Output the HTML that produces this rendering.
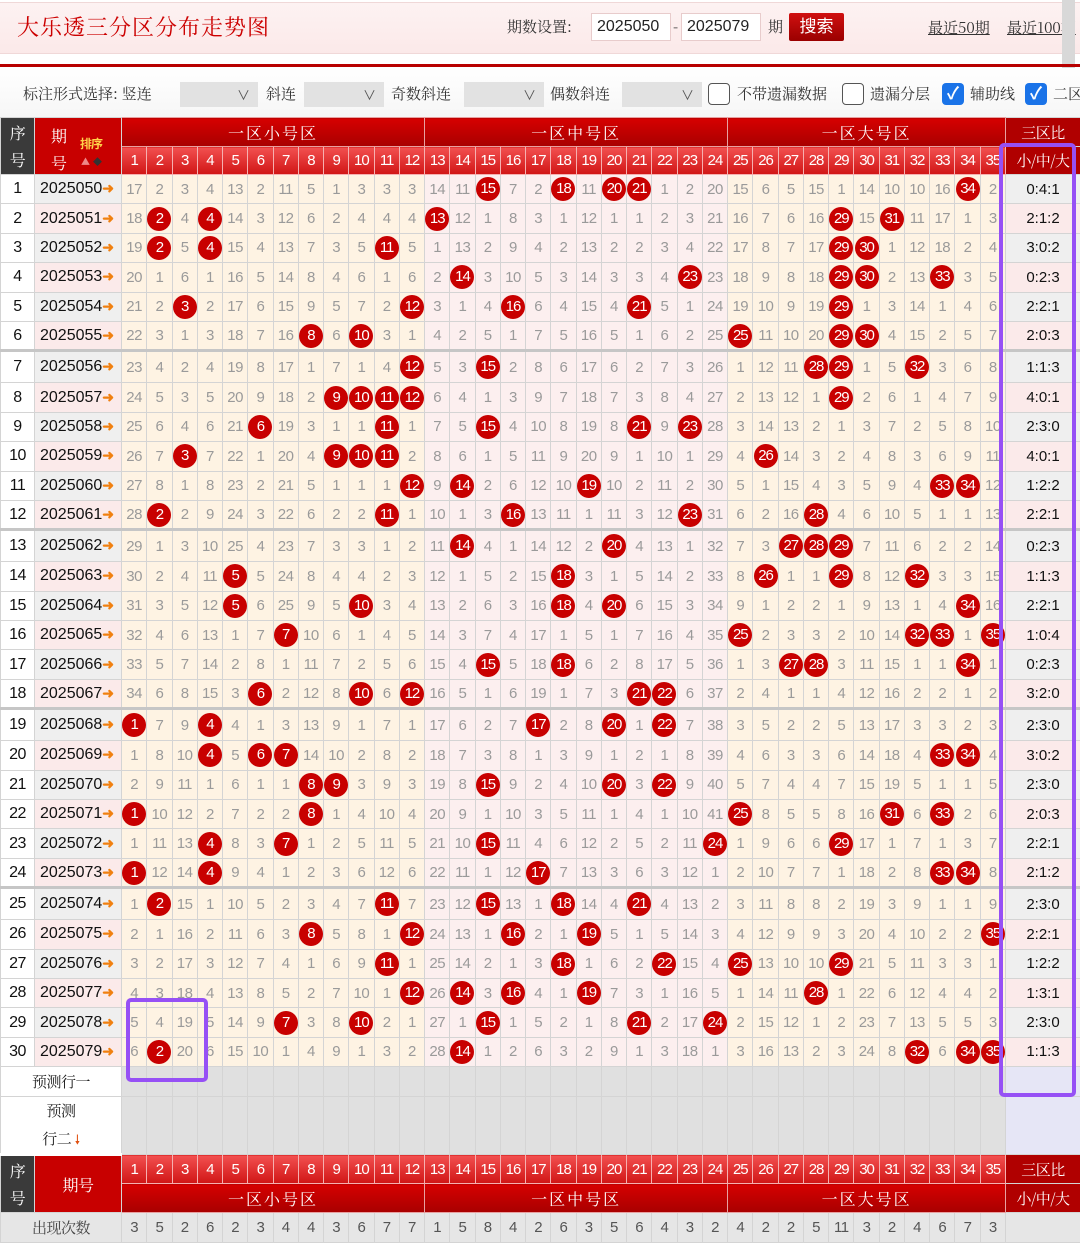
<!DOCTYPE html>
<html><head><meta charset="utf-8">
<style>
*{box-sizing:border-box}
body{margin:0;width:1080px;height:1234px;overflow:hidden;background:#fff;font-family:"Liberation Sans","Noto Sans CJK SC",sans-serif;position:relative}
.top{position:absolute;left:0;top:2px;width:1080px;height:52px;background:linear-gradient(#fdf2f2,#fbe9e9);border-top:1px solid #f0d8d8;border-bottom:1px solid #f0d8d8}
.title{position:absolute;left:17px;top:11px;font-family:"Noto Serif CJK SC",serif;font-size:22px;color:#c00;letter-spacing:1px}
.lab{position:absolute;top:16px;font-family:"Noto Serif CJK SC",serif;font-size:15px;color:#333}
.inp{position:absolute;top:13px;height:28px;width:80px;background:#fff;border:1px solid #e8cccc;font-size:16px;color:#222;padding:4px 0 0 5px}
.btn{position:absolute;left:789px;top:13px;width:55px;height:28px;background:linear-gradient(#d01010,#9a0000);color:#fff;font-size:17px;text-align:center;line-height:27px;border-radius:2px}
.lnk{position:absolute;top:17px;font-family:"Noto Serif CJK SC",serif;font-size:15px;color:#333;text-decoration:underline;white-space:nowrap}
.rl{position:absolute;left:0;top:64px;width:1080px;height:3px;background:#b80000}
.flt{position:absolute;left:0;top:68px;width:1080px;height:49px;background:linear-gradient(#fff,#f6f6f6)}
.ft{position:absolute;top:83px;font-family:"Noto Serif CJK SC",serif;font-size:15px;color:#333;white-space:nowrap}
.sel{position:absolute;top:82px;height:25px;background:#e2e2e2;font-size:13px;color:#555;text-align:right;padding:3px 8px 0 0}
.cb{position:absolute;top:83px;width:22px;height:22px;border:1.5px solid #555;border-radius:4px;background:#fff}
.cbk{position:absolute;top:83px;width:22px;height:22px;border-radius:4px;background:#1a73e8;color:#fff;font-size:17px;text-align:center;line-height:22px;font-weight:bold}
.strip{position:absolute;left:1062px;top:0;width:13px;height:117px;background:#d8d8d8}
table{position:absolute;left:0;top:117px;border-collapse:collapse;table-layout:fixed;width:1080px}
td{border:1px solid #d4d4d4;padding:0;text-align:center;font-size:15px;color:#9a9a9a;white-space:nowrap;overflow:hidden;letter-spacing:-0.5px}
tr.d{height:29.4px}
tr.g{height:32px}
tr.g td{border-top:3px solid #c6c6c6}
td.n{background:#fff;color:#111;font-size:16px}
td.q{color:#111;font-size:16px;text-align:left;padding-left:5px;letter-spacing:0}
td.q i{font-style:normal;color:#f08010;font-size:14px;font-weight:bold}
tr.o td.q,tr.o td.r{background:#efefef}
tr.e td.q,tr.e td.r{background:#fbeaea}
td.r{color:#111;font-size:15px;letter-spacing:0}
td b{display:inline-block;width:24px;height:24px;border-radius:50%;background:#c80000;color:#fff;font-weight:normal;line-height:24px;font-size:15px;letter-spacing:-1px;vertical-align:middle}
.hz{background:linear-gradient(#d60000,#a80000);color:#fff;font-family:"Noto Serif CJK SC",serif;font-size:16px;letter-spacing:2px;border:1px solid #e8a0a0}
.hn{background:linear-gradient(#f25050,#d01515);color:#fff;font-size:15px;border:1px solid #f6b0b0;letter-spacing:-1px}
.hs{background:#3a3a3a;color:#fff;font-family:"Noto Serif CJK SC",serif;font-size:16px;line-height:27px}
.hq{background:#c80000;color:#fff;font-family:"Noto Serif CJK SC",serif;font-size:16px;line-height:27px;position:relative}
.hr{background:#b00000;color:#fff;font-family:"Noto Serif CJK SC",serif;font-size:15px}
.px td.pg{background:#e0e0e0}
.pl{background:#fff;color:#222;font-family:"Noto Serif CJK SC",serif;font-size:15px}
.pv{background:#e6e6f6}
.cnt td{background:#e6e6e6;color:#555}
.box{position:absolute;border:4px solid #9650f5;border-radius:5px}
</style></head><body>
<div class="top"></div>
<div class="title">大乐透三分区分布走势图</div>
<div class="lab" style="left:507px">期数设置:</div>
<div class="inp" style="left:591px">2025050</div>
<div class="lab" style="left:673px">-</div>
<div class="inp" style="left:681px">2025079</div>
<div class="lab" style="left:768px">期</div>
<div class="btn">搜索</div>
<div class="lnk" style="left:928px">最近50期</div>
<div class="lnk" style="left:1007px">最近100期</div>
<div class="strip"></div>
<div class="rl"></div>
<div class="flt"></div>
<div class="ft" style="left:23px">标注形式选择: 竖连</div>
<div class="sel" style="left:180px;width:78px">∨</div>
<div class="ft" style="left:266px">斜连</div>
<div class="sel" style="left:304px;width:80px">∨</div>
<div class="ft" style="left:391px">奇数斜连</div>
<div class="sel" style="left:464px;width:80px">∨</div>
<div class="ft" style="left:550px">偶数斜连</div>
<div class="sel" style="left:622px;width:80px">∨</div>
<div class="cb" style="left:708px"></div>
<div class="ft" style="left:737px">不带遗漏数据</div>
<div class="cb" style="left:842px"></div>
<div class="ft" style="left:870px">遗漏分层</div>
<div class="cbk" style="left:942px">✓</div>
<div class="ft" style="left:970px">辅助线</div>
<div class="cbk" style="left:1025px">✓</div>
<div class="ft" style="left:1053px">二区</div>

<table>
<colgroup><col style="width:34px"><col style="width:87px">
<col span="12" style="width:25.26px;background:#fef3e3"><col span="12" style="width:25.26px;background:#fcefef"><col span="11" style="width:25.26px;background:#fef3e3"><col style="width:75px"></colgroup>
<tr style="height:29px"><td class="hs" rowspan="2">序<br>号</td><td class="hq" rowspan="2"><span style="position:absolute;left:16px;top:4px">期<br>号</span><span style="position:absolute;left:45px;top:12px;font-size:12px;color:#ffd24a;font-family:'Noto Sans CJK SC',sans-serif;font-weight:bold;letter-spacing:-1px">排序</span><span style="position:absolute;left:46px;top:30px;font-size:9px;color:#e88">▲</span><span style="position:absolute;left:58px;top:30px;font-size:9px;color:#333">◆</span></td><td class="hz" colspan="12">一区小号区</td><td class="hz" colspan="12">一区中号区</td><td class="hz" colspan="11">一区大号区</td><td class="hr">三区比</td></tr>
<tr style="height:28px"><td class="hn">1</td><td class="hn">2</td><td class="hn">3</td><td class="hn">4</td><td class="hn">5</td><td class="hn">6</td><td class="hn">7</td><td class="hn">8</td><td class="hn">9</td><td class="hn">10</td><td class="hn">11</td><td class="hn">12</td><td class="hn">13</td><td class="hn">14</td><td class="hn">15</td><td class="hn">16</td><td class="hn">17</td><td class="hn">18</td><td class="hn">19</td><td class="hn">20</td><td class="hn">21</td><td class="hn">22</td><td class="hn">23</td><td class="hn">24</td><td class="hn">25</td><td class="hn">26</td><td class="hn">27</td><td class="hn">28</td><td class="hn">29</td><td class="hn">30</td><td class="hn">31</td><td class="hn">32</td><td class="hn">33</td><td class="hn">34</td><td class="hn">35</td><td class="hr">小/中/大</td></tr>

<tr class="d o"><td class="n">1<td class="q">2025050<i>➜</i><td>17<td>2<td>3<td>4<td>13<td>2<td>11<td>5<td>1<td>3<td>3<td>3<td>14<td>11<td><b>15</b><td>7<td>2<td><b>18</b><td>11<td><b>20</b><td><b>21</b><td>1<td>2<td>20<td>15<td>6<td>5<td>15<td>1<td>14<td>10<td>10<td>16<td><b>34</b><td>2<td class="r">0:4:1</tr>
<tr class="d e"><td class="n">2<td class="q">2025051<i>➜</i><td>18<td><b>2</b><td>4<td><b>4</b><td>14<td>3<td>12<td>6<td>2<td>4<td>4<td>4<td><b>13</b><td>12<td>1<td>8<td>3<td>1<td>12<td>1<td>1<td>2<td>3<td>21<td>16<td>7<td>6<td>16<td><b>29</b><td>15<td><b>31</b><td>11<td>17<td>1<td>3<td class="r">2:1:2</tr>
<tr class="d o"><td class="n">3<td class="q">2025052<i>➜</i><td>19<td><b>2</b><td>5<td><b>4</b><td>15<td>4<td>13<td>7<td>3<td>5<td><b>11</b><td>5<td>1<td>13<td>2<td>9<td>4<td>2<td>13<td>2<td>2<td>3<td>4<td>22<td>17<td>8<td>7<td>17<td><b>29</b><td><b>30</b><td>1<td>12<td>18<td>2<td>4<td class="r">3:0:2</tr>
<tr class="d e"><td class="n">4<td class="q">2025053<i>➜</i><td>20<td>1<td>6<td>1<td>16<td>5<td>14<td>8<td>4<td>6<td>1<td>6<td>2<td><b>14</b><td>3<td>10<td>5<td>3<td>14<td>3<td>3<td>4<td><b>23</b><td>23<td>18<td>9<td>8<td>18<td><b>29</b><td><b>30</b><td>2<td>13<td><b>33</b><td>3<td>5<td class="r">0:2:3</tr>
<tr class="d o"><td class="n">5<td class="q">2025054<i>➜</i><td>21<td>2<td><b>3</b><td>2<td>17<td>6<td>15<td>9<td>5<td>7<td>2<td><b>12</b><td>3<td>1<td>4<td><b>16</b><td>6<td>4<td>15<td>4<td><b>21</b><td>5<td>1<td>24<td>19<td>10<td>9<td>19<td><b>29</b><td>1<td>3<td>14<td>1<td>4<td>6<td class="r">2:2:1</tr>
<tr class="d e"><td class="n">6<td class="q">2025055<i>➜</i><td>22<td>3<td>1<td>3<td>18<td>7<td>16<td><b>8</b><td>6<td><b>10</b><td>3<td>1<td>4<td>2<td>5<td>1<td>7<td>5<td>16<td>5<td>1<td>6<td>2<td>25<td><b>25</b><td>11<td>10<td>20<td><b>29</b><td><b>30</b><td>4<td>15<td>2<td>5<td>7<td class="r">2:0:3</tr>
<tr class="d o g"><td class="n">7<td class="q">2025056<i>➜</i><td>23<td>4<td>2<td>4<td>19<td>8<td>17<td>1<td>7<td>1<td>4<td><b>12</b><td>5<td>3<td><b>15</b><td>2<td>8<td>6<td>17<td>6<td>2<td>7<td>3<td>26<td>1<td>12<td>11<td><b>28</b><td><b>29</b><td>1<td>5<td><b>32</b><td>3<td>6<td>8<td class="r">1:1:3</tr>
<tr class="d e"><td class="n">8<td class="q">2025057<i>➜</i><td>24<td>5<td>3<td>5<td>20<td>9<td>18<td>2<td><b>9</b><td><b>10</b><td><b>11</b><td><b>12</b><td>6<td>4<td>1<td>3<td>9<td>7<td>18<td>7<td>3<td>8<td>4<td>27<td>2<td>13<td>12<td>1<td><b>29</b><td>2<td>6<td>1<td>4<td>7<td>9<td class="r">4:0:1</tr>
<tr class="d o"><td class="n">9<td class="q">2025058<i>➜</i><td>25<td>6<td>4<td>6<td>21<td><b>6</b><td>19<td>3<td>1<td>1<td><b>11</b><td>1<td>7<td>5<td><b>15</b><td>4<td>10<td>8<td>19<td>8<td><b>21</b><td>9<td><b>23</b><td>28<td>3<td>14<td>13<td>2<td>1<td>3<td>7<td>2<td>5<td>8<td>10<td class="r">2:3:0</tr>
<tr class="d e"><td class="n">10<td class="q">2025059<i>➜</i><td>26<td>7<td><b>3</b><td>7<td>22<td>1<td>20<td>4<td><b>9</b><td><b>10</b><td><b>11</b><td>2<td>8<td>6<td>1<td>5<td>11<td>9<td>20<td>9<td>1<td>10<td>1<td>29<td>4<td><b>26</b><td>14<td>3<td>2<td>4<td>8<td>3<td>6<td>9<td>11<td class="r">4:0:1</tr>
<tr class="d o"><td class="n">11<td class="q">2025060<i>➜</i><td>27<td>8<td>1<td>8<td>23<td>2<td>21<td>5<td>1<td>1<td>1<td><b>12</b><td>9<td><b>14</b><td>2<td>6<td>12<td>10<td><b>19</b><td>10<td>2<td>11<td>2<td>30<td>5<td>1<td>15<td>4<td>3<td>5<td>9<td>4<td><b>33</b><td><b>34</b><td>12<td class="r">1:2:2</tr>
<tr class="d e"><td class="n">12<td class="q">2025061<i>➜</i><td>28<td><b>2</b><td>2<td>9<td>24<td>3<td>22<td>6<td>2<td>2<td><b>11</b><td>1<td>10<td>1<td>3<td><b>16</b><td>13<td>11<td>1<td>11<td>3<td>12<td><b>23</b><td>31<td>6<td>2<td>16<td><b>28</b><td>4<td>6<td>10<td>5<td>1<td>1<td>13<td class="r">2:2:1</tr>
<tr class="d o g"><td class="n">13<td class="q">2025062<i>➜</i><td>29<td>1<td>3<td>10<td>25<td>4<td>23<td>7<td>3<td>3<td>1<td>2<td>11<td><b>14</b><td>4<td>1<td>14<td>12<td>2<td><b>20</b><td>4<td>13<td>1<td>32<td>7<td>3<td><b>27</b><td><b>28</b><td><b>29</b><td>7<td>11<td>6<td>2<td>2<td>14<td class="r">0:2:3</tr>
<tr class="d e"><td class="n">14<td class="q">2025063<i>➜</i><td>30<td>2<td>4<td>11<td><b>5</b><td>5<td>24<td>8<td>4<td>4<td>2<td>3<td>12<td>1<td>5<td>2<td>15<td><b>18</b><td>3<td>1<td>5<td>14<td>2<td>33<td>8<td><b>26</b><td>1<td>1<td><b>29</b><td>8<td>12<td><b>32</b><td>3<td>3<td>15<td class="r">1:1:3</tr>
<tr class="d o"><td class="n">15<td class="q">2025064<i>➜</i><td>31<td>3<td>5<td>12<td><b>5</b><td>6<td>25<td>9<td>5<td><b>10</b><td>3<td>4<td>13<td>2<td>6<td>3<td>16<td><b>18</b><td>4<td><b>20</b><td>6<td>15<td>3<td>34<td>9<td>1<td>2<td>2<td>1<td>9<td>13<td>1<td>4<td><b>34</b><td>16<td class="r">2:2:1</tr>
<tr class="d e"><td class="n">16<td class="q">2025065<i>➜</i><td>32<td>4<td>6<td>13<td>1<td>7<td><b>7</b><td>10<td>6<td>1<td>4<td>5<td>14<td>3<td>7<td>4<td>17<td>1<td>5<td>1<td>7<td>16<td>4<td>35<td><b>25</b><td>2<td>3<td>3<td>2<td>10<td>14<td><b>32</b><td><b>33</b><td>1<td><b>35</b><td class="r">1:0:4</tr>
<tr class="d o"><td class="n">17<td class="q">2025066<i>➜</i><td>33<td>5<td>7<td>14<td>2<td>8<td>1<td>11<td>7<td>2<td>5<td>6<td>15<td>4<td><b>15</b><td>5<td>18<td><b>18</b><td>6<td>2<td>8<td>17<td>5<td>36<td>1<td>3<td><b>27</b><td><b>28</b><td>3<td>11<td>15<td>1<td>1<td><b>34</b><td>1<td class="r">0:2:3</tr>
<tr class="d e"><td class="n">18<td class="q">2025067<i>➜</i><td>34<td>6<td>8<td>15<td>3<td><b>6</b><td>2<td>12<td>8<td><b>10</b><td>6<td><b>12</b><td>16<td>5<td>1<td>6<td>19<td>1<td>7<td>3<td><b>21</b><td><b>22</b><td>6<td>37<td>2<td>4<td>1<td>1<td>4<td>12<td>16<td>2<td>2<td>1<td>2<td class="r">3:2:0</tr>
<tr class="d o g"><td class="n">19<td class="q">2025068<i>➜</i><td><b>1</b><td>7<td>9<td><b>4</b><td>4<td>1<td>3<td>13<td>9<td>1<td>7<td>1<td>17<td>6<td>2<td>7<td><b>17</b><td>2<td>8<td><b>20</b><td>1<td><b>22</b><td>7<td>38<td>3<td>5<td>2<td>2<td>5<td>13<td>17<td>3<td>3<td>2<td>3<td class="r">2:3:0</tr>
<tr class="d e"><td class="n">20<td class="q">2025069<i>➜</i><td>1<td>8<td>10<td><b>4</b><td>5<td><b>6</b><td><b>7</b><td>14<td>10<td>2<td>8<td>2<td>18<td>7<td>3<td>8<td>1<td>3<td>9<td>1<td>2<td>1<td>8<td>39<td>4<td>6<td>3<td>3<td>6<td>14<td>18<td>4<td><b>33</b><td><b>34</b><td>4<td class="r">3:0:2</tr>
<tr class="d o"><td class="n">21<td class="q">2025070<i>➜</i><td>2<td>9<td>11<td>1<td>6<td>1<td>1<td><b>8</b><td><b>9</b><td>3<td>9<td>3<td>19<td>8<td><b>15</b><td>9<td>2<td>4<td>10<td><b>20</b><td>3<td><b>22</b><td>9<td>40<td>5<td>7<td>4<td>4<td>7<td>15<td>19<td>5<td>1<td>1<td>5<td class="r">2:3:0</tr>
<tr class="d e"><td class="n">22<td class="q">2025071<i>➜</i><td><b>1</b><td>10<td>12<td>2<td>7<td>2<td>2<td><b>8</b><td>1<td>4<td>10<td>4<td>20<td>9<td>1<td>10<td>3<td>5<td>11<td>1<td>4<td>1<td>10<td>41<td><b>25</b><td>8<td>5<td>5<td>8<td>16<td><b>31</b><td>6<td><b>33</b><td>2<td>6<td class="r">2:0:3</tr>
<tr class="d o"><td class="n">23<td class="q">2025072<i>➜</i><td>1<td>11<td>13<td><b>4</b><td>8<td>3<td><b>7</b><td>1<td>2<td>5<td>11<td>5<td>21<td>10<td><b>15</b><td>11<td>4<td>6<td>12<td>2<td>5<td>2<td>11<td><b>24</b><td>1<td>9<td>6<td>6<td><b>29</b><td>17<td>1<td>7<td>1<td>3<td>7<td class="r">2:2:1</tr>
<tr class="d e"><td class="n">24<td class="q">2025073<i>➜</i><td><b>1</b><td>12<td>14<td><b>4</b><td>9<td>4<td>1<td>2<td>3<td>6<td>12<td>6<td>22<td>11<td>1<td>12<td><b>17</b><td>7<td>13<td>3<td>6<td>3<td>12<td>1<td>2<td>10<td>7<td>7<td>1<td>18<td>2<td>8<td><b>33</b><td><b>34</b><td>8<td class="r">2:1:2</tr>
<tr class="d o g"><td class="n">25<td class="q">2025074<i>➜</i><td>1<td><b>2</b><td>15<td>1<td>10<td>5<td>2<td>3<td>4<td>7<td><b>11</b><td>7<td>23<td>12<td><b>15</b><td>13<td>1<td><b>18</b><td>14<td>4<td><b>21</b><td>4<td>13<td>2<td>3<td>11<td>8<td>8<td>2<td>19<td>3<td>9<td>1<td>1<td>9<td class="r">2:3:0</tr>
<tr class="d e"><td class="n">26<td class="q">2025075<i>➜</i><td>2<td>1<td>16<td>2<td>11<td>6<td>3<td><b>8</b><td>5<td>8<td>1<td><b>12</b><td>24<td>13<td>1<td><b>16</b><td>2<td>1<td><b>19</b><td>5<td>1<td>5<td>14<td>3<td>4<td>12<td>9<td>9<td>3<td>20<td>4<td>10<td>2<td>2<td><b>35</b><td class="r">2:2:1</tr>
<tr class="d o"><td class="n">27<td class="q">2025076<i>➜</i><td>3<td>2<td>17<td>3<td>12<td>7<td>4<td>1<td>6<td>9<td><b>11</b><td>1<td>25<td>14<td>2<td>1<td>3<td><b>18</b><td>1<td>6<td>2<td><b>22</b><td>15<td>4<td><b>25</b><td>13<td>10<td>10<td><b>29</b><td>21<td>5<td>11<td>3<td>3<td>1<td class="r">1:2:2</tr>
<tr class="d e"><td class="n">28<td class="q">2025077<i>➜</i><td>4<td>3<td>18<td>4<td>13<td>8<td>5<td>2<td>7<td>10<td>1<td><b>12</b><td>26<td><b>14</b><td>3<td><b>16</b><td>4<td>1<td><b>19</b><td>7<td>3<td>1<td>16<td>5<td>1<td>14<td>11<td><b>28</b><td>1<td>22<td>6<td>12<td>4<td>4<td>2<td class="r">1:3:1</tr>
<tr class="d o"><td class="n">29<td class="q">2025078<i>➜</i><td>5<td>4<td>19<td>5<td>14<td>9<td><b>7</b><td>3<td>8<td><b>10</b><td>2<td>1<td>27<td>1<td><b>15</b><td>1<td>5<td>2<td>1<td>8<td><b>21</b><td>2<td>17<td><b>24</b><td>2<td>15<td>12<td>1<td>2<td>23<td>7<td>13<td>5<td>5<td>3<td class="r">2:3:0</tr>
<tr class="d e"><td class="n">30<td class="q">2025079<i>➜</i><td>6<td><b>2</b><td>20<td>6<td>15<td>10<td>1<td>4<td>9<td>1<td>3<td>2<td>28<td><b>14</b><td>1<td>2<td>6<td>3<td>2<td>9<td>1<td>3<td>18<td>1<td>3<td>16<td>13<td>2<td>3<td>24<td>8<td><b>32</b><td>6<td><b>34</b><td><b>35</b><td class="r">1:1:3</tr>

<tr class="px" style="height:30px"><td class="pl" colspan="2">预测行一</td><td class="pg"></td><td class="pg"></td><td class="pg"></td><td class="pg"></td><td class="pg"></td><td class="pg"></td><td class="pg"></td><td class="pg"></td><td class="pg"></td><td class="pg"></td><td class="pg"></td><td class="pg"></td><td class="pg"></td><td class="pg"></td><td class="pg"></td><td class="pg"></td><td class="pg"></td><td class="pg"></td><td class="pg"></td><td class="pg"></td><td class="pg"></td><td class="pg"></td><td class="pg"></td><td class="pg"></td><td class="pg"></td><td class="pg"></td><td class="pg"></td><td class="pg"></td><td class="pg"></td><td class="pg"></td><td class="pg"></td><td class="pg"></td><td class="pg"></td><td class="pg"></td><td class="pg"></td><td class="pv"></td></tr>
<tr class="px" style="height:57px"><td class="pl" colspan="2" style="line-height:28px">预测<br>行二 <span style="color:#e05010;font-size:13px">🠗</span></td><td class="pg"></td><td class="pg"></td><td class="pg"></td><td class="pg"></td><td class="pg"></td><td class="pg"></td><td class="pg"></td><td class="pg"></td><td class="pg"></td><td class="pg"></td><td class="pg"></td><td class="pg"></td><td class="pg"></td><td class="pg"></td><td class="pg"></td><td class="pg"></td><td class="pg"></td><td class="pg"></td><td class="pg"></td><td class="pg"></td><td class="pg"></td><td class="pg"></td><td class="pg"></td><td class="pg"></td><td class="pg"></td><td class="pg"></td><td class="pg"></td><td class="pg"></td><td class="pg"></td><td class="pg"></td><td class="pg"></td><td class="pg"></td><td class="pg"></td><td class="pg"></td><td class="pg"></td><td class="pv"></td></tr>

<tr style="height:29px"><td class="hs" rowspan="2" style="border-top:3px solid #fff">序<br>号</td><td class="hq" rowspan="2" style="border-top:3px solid #fff">期号</td><td class="hn">1</td><td class="hn">2</td><td class="hn">3</td><td class="hn">4</td><td class="hn">5</td><td class="hn">6</td><td class="hn">7</td><td class="hn">8</td><td class="hn">9</td><td class="hn">10</td><td class="hn">11</td><td class="hn">12</td><td class="hn">13</td><td class="hn">14</td><td class="hn">15</td><td class="hn">16</td><td class="hn">17</td><td class="hn">18</td><td class="hn">19</td><td class="hn">20</td><td class="hn">21</td><td class="hn">22</td><td class="hn">23</td><td class="hn">24</td><td class="hn">25</td><td class="hn">26</td><td class="hn">27</td><td class="hn">28</td><td class="hn">29</td><td class="hn">30</td><td class="hn">31</td><td class="hn">32</td><td class="hn">33</td><td class="hn">34</td><td class="hn">35</td><td class="hr">三区比</td></tr>
<tr style="height:29px"><td class="hz" colspan="12">一区小号区</td><td class="hz" colspan="12">一区中号区</td><td class="hz" colspan="11">一区大号区</td><td class="hr">小/中/大</td></tr>
<tr class="cnt" style="height:30px"><td colspan="2" style="font-family:'Noto Serif CJK SC',serif;color:#444">出现次数</td><td>3<td>5<td>2<td>6<td>2<td>3<td>4<td>4<td>3<td>6<td>7<td>7<td>1<td>5<td>8<td>4<td>2<td>6<td>3<td>5<td>6<td>4<td>3<td>2<td>4<td>2<td>2<td>5<td>11<td>3<td>2<td>4<td>6<td>7<td>3<td></td></tr>
</table>
<div class="box" style="left:126px;top:998px;width:82px;height:84px"></div>
<div class="box" style="left:999px;top:143px;width:77px;height:954px"></div>
</body></html>
